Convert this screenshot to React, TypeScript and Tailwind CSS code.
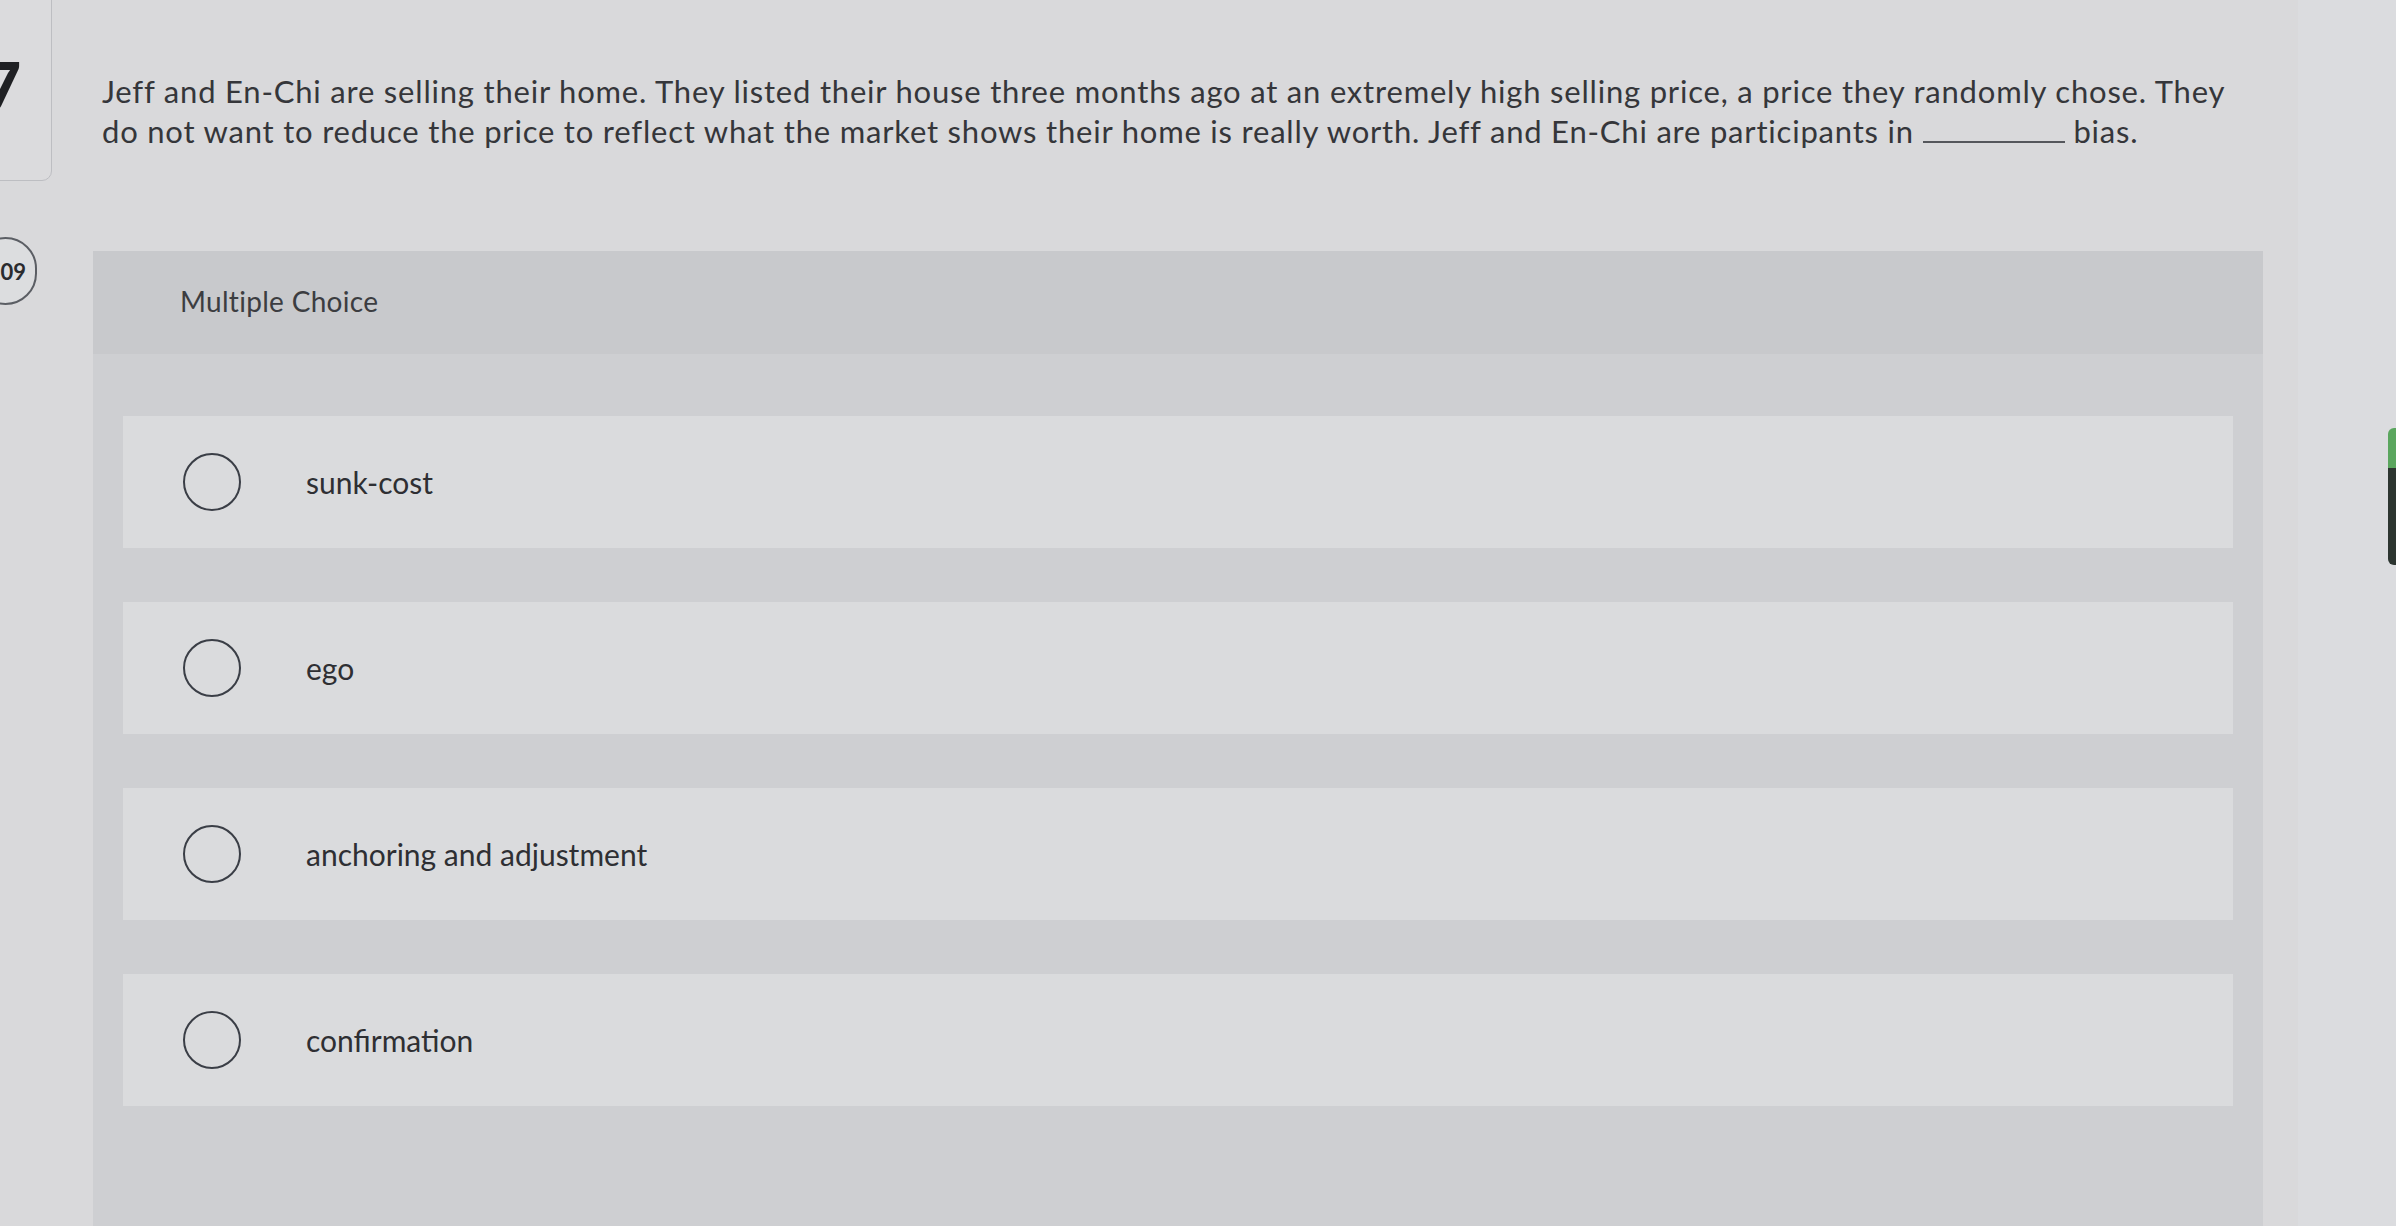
import React from "react";

const options = ["sunk-cost", "ego", "anchoring and adjustment", "confirmation"];

export default function App() {
  return (
    <div
      className="relative flex h-[1226px] w-[2396px] overflow-hidden bg-[#d9d9db] text-[#333438]"
      style={{ fontFamily: "Lato, 'Open Sans', sans-serif" }}
    >
      {/* left rail */}
      <aside className="flex w-[55px] shrink-0 flex-col">
        <div className="-ml-[20px] -mt-[10px] flex h-[191px] w-[72px] items-start justify-end rounded-br-[10px] rounded-tr-[10px] border border-[#bdbec2] bg-[#dbdbdd] pr-[30px] pt-[68px]">
          <span className="text-[64px] font-black leading-[52px] text-[#1f2023]">7</span>
        </div>
        <div className="-ml-[26px] mt-[56px] flex h-[68px] w-[63px] items-center justify-end rounded-full border-2 border-[#5b5e64] bg-[#dcdddf] pr-[9px]">
          <span className="text-[22px] font-bold text-[#2a2b2e]">09</span>
        </div>
      </aside>

      {/* main */}
      <main className="flex min-w-0 flex-1 flex-col">
        <div className="pl-[47px] pt-[71px] text-[31px] leading-[40px] tracking-[0.8px] text-[#35363a]">
          <p className="whitespace-nowrap">
            Jeff and En-Chi are selling their home. They listed their house three months ago at an extremely high selling price, a price they randomly chose. They
          </p>
          <p className="whitespace-nowrap">
            do not want to reduce the price to reflect what the market shows their home is really worth. Jeff and En-Chi are participants in{" "}
            <span className="inline-block w-[142px] border-b-2 border-[#55575c] align-baseline leading-[20px]">&nbsp;</span>{" "}
            bias.
          </p>
        </div>

        <section className="ml-[38px] mt-[100px] flex w-[2170px] flex-1 flex-col bg-[#cecfd2]">
          <div className="flex h-[103px] items-center bg-[#c8c9cc] pb-[4px] pl-[87px]">
            <span className="text-[28px] tracking-[0.3px] text-[#3c3d41]">Multiple Choice</span>
          </div>
          <div className="flex flex-col gap-[54px] px-[30px] pt-[62px]">
            {options.map((o) => (
              <div key={o} className="flex h-[132px] items-center bg-[#dadbdd]">
                <div className="ml-[60px] h-[58px] w-[58px] shrink-0 rounded-full border-[2.5px] border-[#3a3e46]" />
                <span className="ml-[65px] text-[30px] text-[#2e2f33]">{o}</span>
              </div>
            ))}
          </div>
        </section>
      </main>
      <div className="w-[98px] shrink-0 bg-[#dbdcdf]" />

      {/* green edge widget */}
      <div className="absolute right-0 top-[428px] flex h-[137px] w-[8px] flex-col overflow-hidden rounded-l-[6px]">
        <div className="h-[40px] bg-[#5aa65e]" />
        <div className="flex-1 bg-[#2c3530]" />
      </div>
    </div>
  );
}
